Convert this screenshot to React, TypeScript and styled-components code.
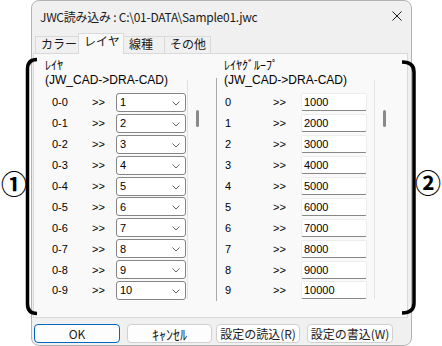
import React from "react";
import styled, { createGlobalStyle } from "styled-components";

const GlobalStyle = createGlobalStyle`
  html, body { margin: 0; padding: 0; background: #ffffff; }
  body { font-family: "Noto Sans CJK JP", "Noto Sans", sans-serif; }
  * { box-sizing: border-box; }
`;

const UI_FONT = `"Noto Sans CJK JP", "Noto Sans", sans-serif`;
const DATA_FONT = `"Liberation Sans", "Noto Sans CJK JP", sans-serif`;

const Page = styled.div`
  position: relative;
  width: 442px;
  height: 346px;
  padding-left: 31px;
  overflow: hidden;
  background: #ffffff;
`;

const Window = styled.div`
  width: 381px;
  height: 346px;
  background: #f0f0f0;
  border: 1px solid #b4b4b4;
  border-radius: 8px;
  display: flex;
  flex-direction: column;
  font-family: ${UI_FONT};
  color: #000;
`;

const TitleBar = styled.div`
  height: 30px;
  display: flex;
  align-items: center;
  justify-content: space-between;
  padding: 0 9px 0 8px;
  font-size: 12px;
  letter-spacing: -0.25px;
  color: #1a1a1a;
`;

const CloseIcon = styled.svg`
  width: 10px;
  height: 10px;
  display: block;
`;

const TabStrip = styled.div`
  height: 22px;
  display: flex;
  align-items: flex-end;
  padding-left: 3px;
  position: relative;
  z-index: 2;
`;

const Tab = styled.div<{ $active?: boolean; $w: number }>`
  width: ${(p) => p.$w}px;
  height: ${(p) => (p.$active ? 21 : 17)}px;
  margin-left: -1px;
  margin-bottom: ${(p) => (p.$active ? -1 : 0)}px;
  &:first-child { margin-left: 0; }
  border: 1px solid #d9d9d9;
  border-bottom: none;
  background: ${(p) => (p.$active ? "#f9f9f9" : "#f0f0f0")};
  position: relative;
  z-index: ${(p) => (p.$active ? 2 : 1)};
  padding-left: 5px;
  font-size: 12px;
  line-height: 14px;
  color: #1a1a1a;
  white-space: nowrap;
`;

const Panel = styled.div`
  margin-left: 1px;
  width: 375px;
  height: 265px;
  border: 1px solid #d9d9d9;
  background: #f9f9f9;
  display: flex;
  font-family: ${DATA_FONT};
  font-size: 11px;
  color: #000;
`;

const Column = styled.div<{ $w: number }>`
  width: ${(p) => p.$w}px;
  display: flex;
  flex-shrink: 0;
`;

const ColumnBody = styled.div<{ $w: number; $pad: number }>`
  width: ${(p) => p.$w}px;
  padding-left: ${(p) => p.$pad}px;
  padding-top: 4px;
  display: flex;
  flex-direction: column;
`;

const GroupHeader = styled.div`
  display: flex;
  flex-direction: column;
  white-space: nowrap;
  color: #000;
`;

const KanaLine = styled.div`
  height: 14px;
  font-family: ${UI_FONT};
  font-size: 12px;
  line-height: 14px;
`;

const HeaderLine = styled.div`
  height: 13px;
  margin-top: 2px;
  font-size: 12px;
  line-height: 13px;
`;

const RowList = styled.div`
  margin-top: 5px;
  display: flex;
  flex-direction: column;
`;

const Row = styled.div<{ $pad: number }>`
  height: 20.9px;
  display: flex;
  align-items: center;
  padding-left: ${(p) => p.$pad}px;
  white-space: nowrap;
`;

const RowLabel = styled.span<{ $w: number }>`
  width: ${(p) => p.$w}px;
  flex-shrink: 0;
`;

const Arrow = styled.span<{ $w: number }>`
  width: ${(p) => p.$w}px;
  flex-shrink: 0;
`;

const Combo = styled.div`
  width: 70px;
  height: 19px;
  border: 1px solid #858585;
  border-radius: 3px;
  background: #ffffff;
  display: flex;
  align-items: center;
  justify-content: space-between;
  padding: 0 5px 0 3px;
`;

const ChevronIcon = styled.svg`
  width: 8px;
  height: 5px;
  display: block;
  margin-top: 2px;
`;

const TextBox = styled.div`
  width: 66px;
  height: 18px;
  background: #ffffff;
  border: 1px solid #ececec;
  border-bottom: 1px solid #868686;
  border-radius: 2px;
  display: flex;
  align-items: center;
  padding-left: 2px;
`;

const ScrollTrack = styled.div`
  position: relative;
  width: 20px;
  margin: 26px 0 18px;
  border-left: 1px solid #e2e2e2;
  flex-shrink: 0;
`;

const ScrollThumb = styled.div`
  position: absolute;
  left: 8px;
  top: 30px;
  width: 3px;
  height: 17px;
  border-radius: 1.5px;
  background: #8a8a8a;
`;

const Separator = styled.div`
  width: 1px;
  margin: 24px 0 16px 9px;
  background: #a8a8a8;
  flex-shrink: 0;
`;

const ButtonBar = styled.div`
  display: flex;
  margin-top: 6px;
  padding-left: 2px;
`;

const DlgButton = styled.div<{ $primary?: boolean; $w: number; $ml: number }>`
  width: ${(p) => p.$w}px;
  margin-left: ${(p) => p.$ml}px;
  height: 19px;
  border: 1px solid ${(p) => (p.$primary ? "#0067c0" : "#d0d0d0")};
  border-radius: 4px;
  background: #fdfdfd;
  display: flex;
  align-items: center;
  justify-content: center;
  font-size: 12px;
  color: #1a1a1a;
  white-space: nowrap;
`;

const ButtonKana = styled.span`
  font-size: 14px;
`;

const Overlay = styled.svg`
  position: absolute;
  left: 0;
  top: 0;
  width: 442px;
  height: 346px;
  pointer-events: none;
`;

const CircledNumber = styled.div<{ $x: number; $y: number }>`
  position: absolute;
  left: ${(p) => p.$x}px;
  top: ${(p) => p.$y}px;
  font-family: ${UI_FONT};
  font-size: 26px;
  line-height: 26px;
  font-weight: 700;
  color: #000;
`;

const tabs = [
  { label: "カラー", w: 44 },
  { label: "レイヤ", w: 46, active: true },
  { label: "線種", w: 42 },
  { label: "その他", w: 47 },
];

const rows = Array.from({ length: 10 }, (_, i) => i);

const Chevron = () => (
  <ChevronIcon viewBox="0 0 8 5">
    <path d="M0.5 0.5 L4 4 L7.5 0.5" fill="none" stroke="#606060" strokeWidth="1" />
  </ChevronIcon>
);

export default function App() {
  return (
    <Page>
      <GlobalStyle />
      <Window>
        <TitleBar>
          <span>{"JWC読み込み : C:\\01-DATA\\Sample01.jwc"}</span>
          <CloseIcon viewBox="0 0 10 10">
            <path d="M0.5 0.5 L9.5 9.5 M9.5 0.5 L0.5 9.5" stroke="#1a1a1a" strokeWidth="1" />
          </CloseIcon>
        </TitleBar>
        <TabStrip>
          {tabs.map((t) => (
            <Tab key={t.label} $w={t.w} $active={t.active}>
              {t.label}
            </Tab>
          ))}
        </TabStrip>
        <Panel>
          <Column $w={183}>
            <ColumnBody $w={154} $pad={11}>
              <GroupHeader>
                <KanaLine>ﾚｲﾔ</KanaLine>
                <HeaderLine>(JW_CAD-&gt;DRA-CAD)</HeaderLine>
              </GroupHeader>
              <RowList>
                {rows.map((i) => (
                  <Row key={i} $pad={7}>
                    <RowLabel $w={40}>{`0-${i}`}</RowLabel>
                    <Arrow $w={24}>&gt;&gt;</Arrow>
                    <Combo>
                      <span>{i + 1}</span>
                      <Chevron />
                    </Combo>
                  </Row>
                ))}
              </RowList>
            </ColumnBody>
            <ScrollTrack>
              <ScrollThumb />
            </ScrollTrack>
            <Separator />
          </Column>
          <Column $w={190}>
            <ColumnBody $w={157} $pad={7}>
              <GroupHeader>
                <KanaLine>ﾚｲﾔｸﾞﾙｰﾌﾟ</KanaLine>
                <HeaderLine>(JW_CAD-&gt;DRA-CAD)</HeaderLine>
              </GroupHeader>
              <RowList>
                {rows.map((i) => (
                  <Row key={i} $pad={1}>
                    <RowLabel $w={48}>{i}</RowLabel>
                    <Arrow $w={28}>&gt;&gt;</Arrow>
                    <TextBox>{(i + 1) * 1000}</TextBox>
                  </Row>
                ))}
              </RowList>
            </ColumnBody>
            <ScrollTrack>
              <ScrollThumb />
            </ScrollTrack>
          </Column>
        </Panel>
        <ButtonBar>
          <DlgButton $primary $w={86} $ml={0}>OK</DlgButton>
          <DlgButton $w={85} $ml={7}>
            <ButtonKana>ｷｬﾝｾﾙ</ButtonKana>
          </DlgButton>
          <DlgButton $w={84} $ml={4}>設定の読込(R)</DlgButton>
          <DlgButton $w={86} $ml={7}>設定の書込(W)</DlgButton>
        </ButtonBar>
      </Window>
      <Overlay viewBox="0 0 442 346">
        <path
          d="M37 59.5 Q27.5 59.5 27.5 69 L27.5 304 Q27.5 313.5 37 313.5"
          fill="none"
          stroke="#000"
          strokeWidth="3.5"
        />
        <path
          d="M402 62 Q414 62 414 72 L414 303 Q414 313 402 313"
          fill="none"
          stroke="#000"
          strokeWidth="3.5"
        />
      </Overlay>
      <CircledNumber $x={1} $y={170}>①</CircledNumber>
      <CircledNumber $x={415} $y={169}>②</CircledNumber>
    </Page>
  );
}
